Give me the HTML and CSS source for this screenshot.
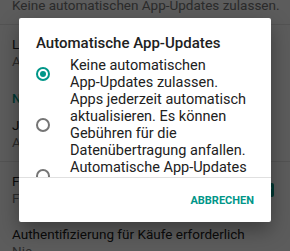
FILE: index.html
```html
<!DOCTYPE html>
<html lang="de">
<head>
    <meta charset="UTF-8">
    <meta name="viewport" content="width=device-width, initial-scale=1.0">
    <title>Einstellungen</title>
    <link rel="stylesheet" href="styles.css">
</head>
<body>
    <div class="settings">
        <div class="item first">
            <div class="summary">Keine automatischen App-Updates zulassen.</div>
        </div>
        <div class="divider"></div>
        <div class="item">
            <div class="label">Lokalen Suchverlauf löschen</div>
            <div class="summary">Alle bisherigen Suchanfragen entfernen</div>
        </div>
        <div class="category">Nutzersteuerung</div>
        <div class="item">
            <div class="label">Jugendschutzeinstellungen</div>
            <div class="summary">Aus</div>
        </div>
        <div class="divider"></div>
        <div class="item with-check">
            <div class="text">
                <div class="label">Fingerabdruck-Authentifizierung</div>
                <div class="summary">Fingerabdruck für Käufe verwenden</div>
            </div>
            <div class="checkbox">
                <svg width="14" height="14" viewBox="0 0 14 14"><path d="M3 7.2l2.6 2.6L11 4.4" fill="none" stroke="#fff" stroke-width="2"/></svg>
            </div>
        </div>
        <div class="item">
            <div class="label">Authentifizierung für Käufe erforderlich</div>
            <div class="summary">Nie</div>
        </div>
    </div>

    <div class="scrim"></div>

    <div class="dialog">
        <div class="dialog-title">Automatische App-Updates</div>
        <div class="choices">
            <div class="choice">
                <span class="radio checked"></span>
                <span class="choice-text">Keine automatischen <span class="nobreak">App-Updates</span> zulassen.</span>
            </div>
            <div class="choice">
                <span class="radio"></span>
                <span class="choice-text">Apps jederzeit automatisch aktualisieren. Es können Gebühren für die Datenübertragung anfallen.</span>
            </div>
            <div class="choice">
                <span class="radio"></span>
                <span class="choice-text">Automatische <span class="nobreak">App-Updates</span> nur über WLAN.</span>
            </div>
        </div>
        <div class="actions">
            <button class="btn">Abbrechen</button>
        </div>
    </div>
</body>
</html>
```

FILE: styles.css
```css
* {
    margin: 0;
    padding: 0;
    box-sizing: border-box;
}

body {
    width: 290px;
    height: 251px;
    overflow: hidden;
    background-color: #fafafa;
    font-family: Roboto, "Noto Sans", sans-serif;
    position: relative;
}

.settings {
    margin-top: -13px;
}

.item {
    padding: 10px 12px;
}

.label {
    font-size: 13.5px;
    line-height: 17px;
    color: #212121;
    white-space: nowrap;
}

.summary {
    font-size: 13.5px;
    line-height: 16px;
    color: #757575;
    white-space: nowrap;
}

.divider {
    height: 1px;
    background-color: #e0e0e0;
    margin: 1px 0;
}

.category {
    padding: 12px 12px 0;
    font-size: 13px;
    line-height: 16px;
    font-weight: 500;
    color: #009688;
}

.with-check {
    display: flex;
    align-items: center;
    justify-content: space-between;
    padding-right: 16px;
}

.checkbox {
    width: 14px;
    height: 14px;
    border-radius: 2px;
    background-color: #009688;
    display: flex;
}

.scrim {
    position: absolute;
    inset: 0;
    background-color: rgba(0, 0, 0, 0.63);
}

.dialog {
    position: absolute;
    left: 19px;
    top: 18px;
    width: 252px;
    height: 204px;
    background-color: #fff;
    border-radius: 2px;
    box-shadow: 0 8px 20px rgba(0, 0, 0, 0.35);
    display: flex;
    flex-direction: column;
}

.dialog-title {
    padding: 15px 17px 0;
    font-size: 15px;
    line-height: 20px;
    font-weight: 500;
    color: #212121;
}

.choices {
    height: 125px;
    overflow: hidden;
    padding-top: 4px;
    border-bottom: 1px solid #e0e0e0;
}

.choice {
    display: flex;
    align-items: center;
    padding: 0 22px 0 17px;
}

.radio {
    flex: none;
    width: 14px;
    height: 14px;
    border: 2px solid #757575;
    border-radius: 50%;
    margin-right: 20px;
    position: relative;
}

.radio.checked {
    border-color: #009688;
}

.radio.checked::after {
    content: "";
    position: absolute;
    left: 2px;
    top: 2px;
    width: 6px;
    height: 6px;
    border-radius: 50%;
    background-color: #009688;
}

.choice-text {
    font-size: 14.5px;
    line-height: 17px;
    color: #212121;
}

.nobreak {
    white-space: nowrap;
}

.actions {
    flex: 1;
    display: flex;
    align-items: center;
    justify-content: flex-end;
    padding-right: 17px;
}

.btn {
    border: none;
    background: none;
    font-family: Roboto, "Noto Sans", sans-serif;
    font-size: 11px;
    font-weight: 700;
    text-transform: uppercase;
    color: #009688;
}
```
